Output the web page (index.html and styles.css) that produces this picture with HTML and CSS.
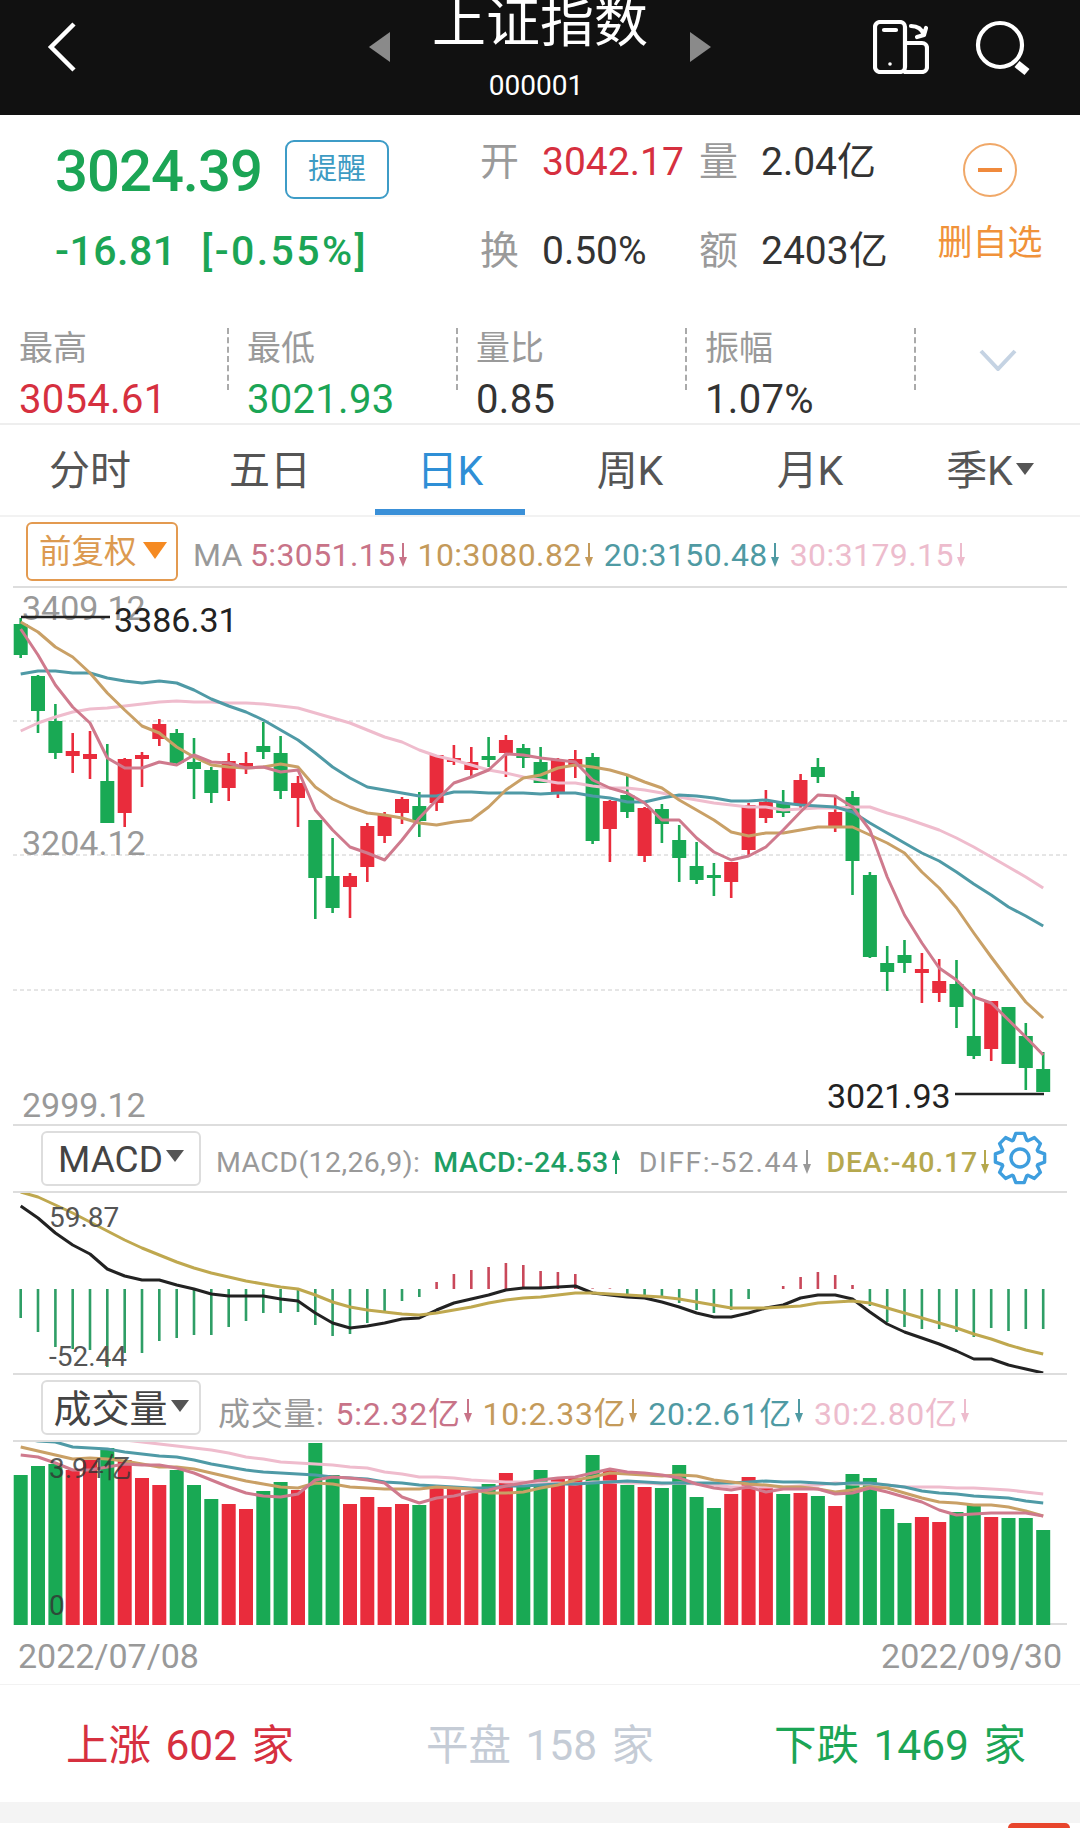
FILE: index.html
```html
<!DOCTYPE html>
<html lang="zh-CN">
<head>
    <meta charset="UTF-8">
    <meta name="viewport" content="width=device-width, initial-scale=1.0">
    <title>上证指数</title>
    <link rel="stylesheet" href="styles.css">
</head>
<body>
    <svg class="defs" width="0" height="0">
        <symbol id="arrowDown" viewBox="0 0 8 24">
            <path d="M3 0h2v14h3l-4 10-4-10h3z"/>
        </symbol>
    </svg>

    <header class="topbar">
        <div class="topbar-left">
            <svg class="icon-back" width="30" height="52" viewBox="0 0 30 52">
                <path d="M27 3 4 26l23 23"/>
            </svg>
        </div>
        <div class="topbar-title">
            <span class="tri tri-left"></span>
            <div class="title-block">
                <div class="title">上证指数</div>
                <div class="code">000001</div>
            </div>
            <span class="tri tri-right"></span>
        </div>
        <div class="topbar-right">
            <svg class="icon-line" width="56" height="54" viewBox="0 0 56 54">
                <rect x="2" y="2" width="30" height="50" rx="5"/>
                <path d="M11 10h12"/>
                <circle class="dot" cx="17" cy="44" r="1.8"/>
                <path d="M32 23h17a5 5 0 0 1 5 5v19a5 5 0 0 1-5 5H32"/>
                <path d="M38 6c6 0 11 3 13 9M44 17l7-2 2-7"/>
            </svg>
            <svg class="icon-line" width="56" height="56" viewBox="0 0 56 56">
                <circle cx="25" cy="25" r="22"/>
                <path class="handle" d="m42 44 10 8"/>
            </svg>
        </div>
    </header>

    <section class="quote">
        <div class="quote-top">
            <div class="quote-price">
                <div class="price-row">
                    <span class="price">3024.39</span>
                    <span class="remind">提醒</span>
                </div>
                <div class="change">-16.81 <span class="change-pct">[-0.55%]</span></div>
            </div>
            <div class="quote-grid">
                <span class="q-label">开</span><span class="q-value red">3042.17</span>
                <span class="q-label">量</span><span class="q-value">2.04亿</span>
                <span class="q-label">换</span><span class="q-value">0.50%</span>
                <span class="q-label">额</span><span class="q-value">2403亿</span>
            </div>
            <div class="quote-action">
                <span class="minus-circle"><span class="minus"></span></span>
                <span class="action-text">删自选</span>
            </div>
        </div>
        <div class="stats">
            <div class="stat">
                <div class="stat-label">最高</div>
                <div class="stat-value red">3054.61</div>
            </div>
            <div class="stat">
                <div class="stat-label">最低</div>
                <div class="stat-value green">3021.93</div>
            </div>
            <div class="stat">
                <div class="stat-label">量比</div>
                <div class="stat-value">0.85</div>
            </div>
            <div class="stat">
                <div class="stat-label">振幅</div>
                <div class="stat-value">1.07%</div>
            </div>
            <div class="stat-more">
                <svg width="38" height="22" viewBox="0 0 38 22"><path d="M2 2l17 18L36 2"/></svg>
            </div>
        </div>
    </section>

    <nav class="tabs">
        <div class="tab">分时</div>
        <div class="tab">五日</div>
        <div class="tab active">日K</div>
        <div class="tab">周K</div>
        <div class="tab">月K</div>
        <div class="tab">季K<span class="caret"></span></div>
    </nav>

    <div class="bar bar-first">
        <div class="btn-orange">前复权<span class="caret caret-orange"></span></div>
        <div class="legend legend-ma">
            <span class="leg gray leg-ma">MA</span>
            <span class="leg c5">5:3051.15<svg class="arrow"><use href="#arrowDown"/></svg></span>
            <span class="leg c10">10:3080.82<svg class="arrow"><use href="#arrowDown"/></svg></span>
            <span class="leg c20">20:3150.48<svg class="arrow"><use href="#arrowDown"/></svg></span>
            <span class="leg c30">30:3179.15<svg class="arrow"><use href="#arrowDown"/></svg></span>
        </div>
    </div>

    <svg class="chart chart-main" width="1080" height="536" viewBox="0 588 1080 536">
        <path class="grid" d="M13 721H1067M13 855H1067M13 990H1067"/>
        <text class="axis" x="22" y="620">3409.12</text>
        <text class="axis" x="22" y="855">3204.12</text>
        <text class="axis" x="22" y="1117">2999.12</text>
        <g id="candles"></g>
        <g id="maLines"></g>
        <path class="marker" d="M21 617H110M955 1094H1044"/>
        <text class="mark-text" x="114" y="632">3386.31</text>
        <text class="mark-text" x="827" y="1108">3021.93</text>
    </svg>

    <div class="bar bar-sub">
        <div class="btn-gray btn-macd">MACD<span class="caret"></span></div>
        <div class="legend legend-macd">
            <span class="leg gray">MACD(12,26,9):</span>
            <span class="leg macd-green">MACD:-24.53<svg class="arrow arrow-up"><use href="#arrowDown"/></svg></span>
            <span class="leg gray leg-diff">DIFF:-52.44<svg class="arrow"><use href="#arrowDown"/></svg></span>
            <span class="leg dea">DEA:-40.17<svg class="arrow"><use href="#arrowDown"/></svg></span>
        </div>
        <svg class="gear" width="54" height="54" viewBox="-27 -27 54 54">
            <path id="gearPath"/>
            <circle r="9"/>
        </svg>
    </div>

    <svg class="chart chart-macd" width="1080" height="180" viewBox="0 1193 1080 180">
        <g id="macdBars"></g>
        <g id="macdLines"></g>
        <text class="sub-text" x="49" y="1227">59.87</text>
        <text class="sub-text" x="49" y="1366">-52.44</text>
    </svg>

    <div class="bar bar-sub bar-vol">
        <div class="btn-gray btn-vol">成交量<span class="caret"></span></div>
        <div class="legend legend-vol">
            <span class="leg gray">成交量:</span>
            <span class="leg c5">5:2.32亿<svg class="arrow"><use href="#arrowDown"/></svg></span>
            <span class="leg c10">10:2.33亿<svg class="arrow"><use href="#arrowDown"/></svg></span>
            <span class="leg c20">20:2.61亿<svg class="arrow"><use href="#arrowDown"/></svg></span>
            <span class="leg c30">30:2.80亿<svg class="arrow"><use href="#arrowDown"/></svg></span>
        </div>
    </div>

    <svg class="chart chart-vol" width="1080" height="183" viewBox="0 1442 1080 183">
        <path class="grid-solid" d="M1050 1624H1067"/>
        <g id="volBars"></g>
        <g id="volLines"></g>
        <text class="sub-text sub-over" x="49" y="1478">3.94亿</text>
        <text class="sub-text sub-over" x="49" y="1615">0</text>
    </svg>

    <div class="dates">
        <span>2022/07/08</span>
        <span>2022/09/30</span>
    </div>

    <div class="breadth">
        <div class="red">上涨 602 家</div>
        <div class="flat">平盘 158 家</div>
        <div class="green">下跌 1469 家</div>
    </div>

    <div class="footer-gray"></div>
    <div class="footer-end"><span class="red-tab"></span></div>

    <script src="chart.js"></script>
</body>
</html>
```

FILE: styles.css
```css
* {
    box-sizing: border-box;
}
body {
    margin: 0;
    width: 1080px;
    height: 1828px;
    overflow: hidden;
    background: white;
    color: #333;
    font-family: Roboto, "Noto Sans CJK SC", sans-serif;
}
.defs {
    position: absolute;
}
.red {
    color: #d6303f;
}
.green {
    color: #1ba555;
}

/* top bar */
.topbar {
    height: 115px;
    background: #111;
    color: white;
    display: grid;
    grid-template-columns: 1fr auto 1fr;
    overflow: hidden;
}
.topbar-left {
    padding: 21px 0 0 47px;
}
.icon-back path {
    fill: none;
    stroke: white;
    stroke-width: 4.5;
}
.topbar-title {
    display: flex;
    gap: 42px;
}
.tri {
    width: 0;
    height: 0;
    margin-top: 32px;
    border-top: 15px solid transparent;
    border-bottom: 15px solid transparent;
}
.tri-left {
    border-right: 21px solid #8a8a8a;
}
.tri-right {
    border-left: 21px solid #8a8a8a;
}
.title-block {
    text-align: center;
}
.title {
    font-size: 54px;
    line-height: 54px;
    margin-top: -3px;
}
.code {
    font-size: 28px;
    line-height: 30px;
    margin-top: 20px;
    padding-right: 8px;
}
.topbar-right {
    display: flex;
    justify-content: flex-end;
    align-items: flex-start;
    gap: 46px;
    padding: 20px 49px 0 0;
}
.icon-line {
    fill: none;
    stroke: white;
    stroke-width: 4.2;
    stroke-linecap: round;
    stroke-linejoin: round;
}
.icon-line .dot {
    fill: white;
    stroke: none;
}
.icon-line .handle {
    stroke-width: 8;
    stroke-linecap: butt;
}

/* quote */
.quote {
    height: 310px;
    border-bottom: 2px solid #eee;
}
.quote-top {
    height: 213px;
    padding-left: 55px;
    display: flex;
}
.quote-price {
    width: 425px;
    padding-top: 24px;
}
.price-row {
    display: flex;
    align-items: center;
    gap: 23px;
    height: 60px;
}
.price {
    font-size: 58px;
    line-height: 60px;
    font-weight: 500;
    color: #1ba555;
    letter-spacing: -1px;
    padding-top: 4px;
}
.remind {
    width: 104px;
    height: 59px;
    border: 2.5px solid #3d9cc7;
    border-radius: 9px;
    color: #3d9bc3;
    font-size: 29px;
    line-height: 54px;
    text-align: center;
}
.change {
    margin-top: 27px;
    font-size: 41px;
    line-height: 50px;
    font-weight: 500;
    letter-spacing: 0.5px;
    color: #1ba555;
    white-space: nowrap;
}
.change-pct {
    margin-left: 14px;
    letter-spacing: 2.4px;
}
.quote-grid {
    width: 457px;
    margin-top: 2px;
    display: grid;
    grid-template-columns: 62px 157px 62px 176px;
    grid-auto-rows: 89px;
    align-items: center;
}
.q-label {
    font-size: 39px;
    line-height: 44px;
    color: #9a9a9a;
}
.q-value {
    font-size: 39px;
    line-height: 44px;
    white-space: nowrap;
}
.quote-action {
    width: 106px;
    padding-top: 28px;
    display: flex;
    flex-direction: column;
    align-items: center;
    gap: 29px;
}
.minus-circle {
    width: 54px;
    height: 54px;
    border: 2.5px solid #f0a868;
    border-radius: 50%;
    display: flex;
    align-items: center;
    justify-content: center;
}
.minus {
    width: 24px;
    height: 4px;
    background: #f08a3c;
}
.action-text {
    font-size: 35px;
    line-height: 35px;
    color: #f0923a;
    white-space: nowrap;
}
.stats {
    display: flex;
    padding-top: 2px;
}
.stat {
    position: relative;
    width: 229px;
    padding-left: 18px;
}
.stat:first-child {
    padding-left: 19px;
}
.stat::after {
    content: "";
    position: absolute;
    right: 0;
    top: -2px;
    height: 62px;
    border-right: 2px dashed #aaa;
}
.stat-label {
    font-size: 34px;
    line-height: 36px;
    color: #9a9a9a;
}
.stat-value {
    font-size: 40px;
    line-height: 52px;
    margin-top: 8px;
    letter-spacing: 0.3px;
    white-space: nowrap;
}
.stat-more {
    flex: 1;
    padding: 19px 0 0 63px;
}
.stat-more path {
    fill: none;
    stroke: #c5d3e3;
    stroke-width: 4;
}

/* period tabs */
.tabs {
    height: 92px;
    display: flex;
    border-bottom: 2px solid #f2f2f2;
}
.tab {
    position: relative;
    width: 180px;
    font-size: 41px;
    line-height: 93px;
    text-align: center;
    color: #555;
}
.tab.active {
    color: #2f8fd6;
}
.tab.active::after {
    content: "";
    position: absolute;
    left: 15px;
    right: 15px;
    bottom: 0;
    height: 6px;
    background: #3a90d8;
}
.caret {
    display: inline-block;
    width: 0;
    height: 0;
    margin-left: 3px;
    vertical-align: 10px;
    border-left: 9px solid transparent;
    border-right: 9px solid transparent;
    border-top: 12px solid #555;
}

/* indicator bars */
.bar {
    margin: 0 13px;
    display: flex;
    align-items: center;
    border-bottom: 2px solid #ddd;
}
.bar-first {
    height: 71px;
}
.bar-sub {
    position: relative;
    height: 69px;
    border-top: 2px solid #ddd;
}
.btn-orange {
    width: 152px;
    height: 59px;
    margin-left: 13px;
    border: 2.5px solid #e39a50;
    border-radius: 6px;
    color: #dc9a50;
    font-size: 32.5px;
    line-height: 57px;
    padding-left: 11px;
    white-space: nowrap;
}
.caret-orange {
    margin-left: 6px;
    vertical-align: 4px;
    border-left: 12px solid transparent;
    border-right: 12px solid transparent;
    border-top: 17px solid #f58a22;
}
.btn-gray {
    width: 160px;
    height: 55px;
    margin-left: 28px;
    border: 2px solid #ddd;
    border-radius: 6px;
    color: #444;
    text-align: center;
    white-space: nowrap;
}
.btn-macd {
    font-size: 37px;
    line-height: 54px;
}
.btn-vol {
    font-size: 38px;
    line-height: 54px;
}
.legend {
    display: flex;
    white-space: nowrap;
}
.leg {
    display: inline-flex;
    align-items: center;
}
.legend-ma {
    margin-left: 15px;
    padding-top: 7px;
    gap: 11px;
    font-size: 32px;
    letter-spacing: 0.4px;
}
.leg-ma {
    margin-right: -4px;
}
.legend-macd {
    margin-left: 15px;
    padding-top: 7px;
    gap: 13px;
    font-size: 28.5px;
    letter-spacing: 0.4px;
}
.leg-diff {
    letter-spacing: 1.5px;
    margin-left: 6px;
    margin-right: 3px;
}
.legend-vol {
    margin-left: 17px;
    padding-top: 6px;
    gap: 11px;
    font-size: 32px;
    letter-spacing: 0.7px;
}
.gray {
    color: #999;
}
.c5 {
    color: #c87388;
}
.c10 {
    color: #c49a5a;
}
.c20 {
    color: #4f9aa3;
}
.c30 {
    color: #edbccd;
}
.macd-green {
    color: #1e9e64;
    font-weight: 500;
}
.dea {
    color: #b5a84e;
    font-weight: 500;
    letter-spacing: 0.8px;
}
.arrow {
    width: 8px;
    height: 24px;
    margin-left: 3px;
    fill: currentColor;
}
.arrow-up {
    transform: rotate(180deg);
}
.gear {
    position: absolute;
    right: 20px;
    top: 5px;
    fill: none;
    stroke: #3e9ede;
    stroke-width: 3.4;
    stroke-linejoin: round;
}

/* charts */
.chart {
    display: block;
}
.grid {
    fill: none;
    stroke: #ccc;
    stroke-width: 1;
    stroke-dasharray: 4 3;
}
.grid-solid {
    fill: none;
    stroke: #ddd;
    stroke-width: 2;
}
.marker {
    fill: none;
    stroke: #222;
    stroke-width: 2.5;
}
.axis {
    font-size: 34px;
    fill: #999;
}
.mark-text {
    font-size: 34px;
    fill: #222;
}
.sub-text {
    font-size: 28px;
    fill: #555;
}
.sub-over {
    fill: #333;
    opacity: 0.8;
}
.ma-line {
    fill: none;
    stroke-width: 3;
    stroke-linejoin: round;
}

/* bottom */
.dates {
    height: 60px;
    padding: 2px 18px 0;
    display: flex;
    justify-content: space-between;
    align-items: center;
    font-size: 34px;
    color: #999;
    border-bottom: 1px solid #f2f2f2;
}
.breadth {
    height: 117px;
    padding-bottom: 4px;
    display: grid;
    grid-template-columns: repeat(3, 360px);
    align-items: center;
    text-align: center;
    font-size: 42.5px;
    word-spacing: 4px;
}
.flat {
    color: #c5ccd6;
}
.footer-gray {
    height: 21px;
    background: #f4f4f4;
}
.footer-end {
    display: flex;
    justify-content: flex-end;
    padding-right: 10px;
}
.red-tab {
    width: 62px;
    height: 5px;
    background: #e8452c;
    border-radius: 14px 14px 0 0;
}
```

FILE: chart.js
```js
const GREEN = "#19a954";
const RED = "#e92c3c";
const START_X = 20.7;
const STEP = 17.33;

function xAt(i) {
    return START_X + i * STEP;
}

function lineSvg(values, color) {
    const points = values.map((y, i) => xAt(i).toFixed(1) + "," + y).join(" ");
    return `<polyline class="ma-line" points="${points}" stroke="${color}"/>`;
}

// [g|r, wick top, wick bottom, body top, body bottom]
const candles = [
    ["g",618,658,624,655],["g",675,733,676,711],["g",704,759,721,753],["r",733,773,751,756],["r",731,779,754,759],
    ["g",744,823,781,823],["r",758,827,759,813],["r",752,787,755,759],["r",719,746,724,739],["g",729,765,733,763],
    ["g",738,799,762,769],["g",767,803,770,793],["r",753,801,761,788],["r",752,774,763,767],["g",722,759,746,752],
    ["g",736,799,753,791],["r",776,827,783,798],["g",820,919,820,878],["g",838,913,876,908],["r",873,918,876,887],
    ["r",823,882,826,867],["r",812,843,815,836],["r",797,824,799,813],["g",792,837,806,821],["r",755,811,755,803],
    ["r",745,765,758,762],["r",747,778,762,770],["g",737,767,756,760],["r",735,777,740,753],["g",744,768,748,758],
    ["g",747,783,762,783],["r",758,798,760,794],["r",750,778,759,766],["g",753,844,757,841],["r",800,862,801,829],
    ["g",774,818,795,812],["r",807,862,808,856],["g",804,843,809,824],["g",825,882,840,858],["g",842,884,866,880],
    ["g",863,896,875,878],["r",862,898,862,882],["r",803,855,805,850],["r",790,823,802,818],["g",790,817,803,813],
    ["r",774,808,780,805],["g",758,783,767,777],["r",795,832,812,826],["g",791,895,797,861],["g",872,958,875,957],
    ["g",946,991,963,972],["g",940,973,955,963],["r",953,1003,969,973],["r",959,1002,981,993],["g",960,1028,984,1007],
    ["g",989,1059,1036,1056],["r",1001,1061,1001,1049],["g",1007,1064,1007,1064],["g",1023,1090,1036,1068],["g",1052,1092,1069,1092]
];

const ma5 = [629,655,685,707,723,758,768,768,762,765,755,762,763,768,767,772,770,810,830,847,853,860,840,818,800,783,777,770,754,755,758,760,762,780,788,793,803,820,820,838,852,860,856,847,830,812,795,796,807,830,877,915,943,968,980,997,1003,1020,1037,1055];
const ma10 = [622,632,647,657,673,693,710,726,733,747,757,765,767,768,767,764,767,787,799,807,813,815,818,823,825,822,820,807,790,778,775,768,765,767,770,775,782,788,800,810,820,832,836,833,833,830,827,827,827,835,843,853,872,888,908,933,957,980,1002,1018];
const ma20 = [674,671,671,673,673,678,681,683,681,683,690,699,706,712,720,730,740,753,767,778,787,790,793,796,796,792,792,793,793,793,794,793,793,796,798,802,802,798,795,796,798,801,801,800,803,805,806,807,812,823,833,843,853,861,872,884,895,907,916,926];
const ma30 = [731,723,717,712,709,708,706,704,702,701,702,702,703,703,704,706,708,713,718,723,730,737,742,750,756,760,765,770,773,777,780,783,783,786,788,788,790,793,797,800,803,805,807,807,810,809,808,808,807,807,813,818,824,830,838,847,857,867,877,888];

// height from the zero line, up is red
const macd = [-29,-43,-58,-60,-61,-78,-64,-64,-52,-49,-46,-46,-38,-32,-24,-24,-23,-36,-47,-45,-34,-22,-12,-8,7,15,19,22,26,24,18,17,15,0.6,0.6,-6,-7,-8,-14,-21,-24,-21,-10,0,3,12,17,14,4,-17,-33,-38,-40,-40,-43,-48,-39,-42,-40,-40];
const diff = [1206,1218,1233,1245,1254,1269,1276,1280,1280,1285,1289,1294,1296,1296,1296,1299,1301,1313,1323,1328,1326,1323,1319,1318,1310,1303,1299,1295,1290,1288,1288,1287,1286,1293,1295,1297,1298,1302,1307,1313,1317,1317,1313,1308,1305,1298,1295,1295,1299,1312,1324,1332,1338,1344,1351,1359,1359,1365,1369,1373];
const dea = [1192,1197,1205,1213,1222,1231,1240,1248,1255,1262,1268,1273,1277,1281,1284,1287,1289,1295,1302,1307,1310,1312,1314,1315,1313,1310,1307,1303,1300,1298,1297,1295,1293,1293,1294,1295,1296,1297,1299,1302,1305,1308,1308,1308,1307,1306,1303,1302,1301,1303,1308,1313,1318,1323,1328,1334,1339,1345,1350,1354];

const volume = [150,159,161,155,165,177,165,147,140,155,140,126,121,116,134,143,135,182,150,121,128,118,121,120,138,139,133,141,152,140,155,147,147,170,155,140,138,137,160,128,117,131,148,140,131,132,129,119,151,147,116,102,108,103,113,121,108,107,107,95];
const vol5 = [1455,1457,1463,1470,1470,1467,1464,1465,1465,1468,1473,1480,1487,1493,1496,1497,1494,1480,1477,1478,1480,1483,1497,1503,1498,1496,1492,1490,1486,1483,1480,1478,1477,1473,1469,1472,1473,1475,1478,1484,1488,1490,1487,1492,1489,1489,1489,1494,1493,1488,1492,1497,1502,1510,1515,1514,1513,1513,1513,1516];
const vol10 = [1447,1451,1455,1459,1458,1459,1461,1464,1467,1467,1469,1473,1477,1481,1484,1487,1488,1483,1484,1487,1488,1489,1489,1489,1487,1488,1489,1493,1493,1492,1488,1485,1480,1477,1473,1474,1475,1476,1475,1476,1480,1482,1484,1485,1487,1487,1489,1492,1490,1487,1488,1493,1498,1502,1503,1505,1505,1507,1511,1516];
const vol20 = [1438,1441,1442,1447,1448,1449,1452,1454,1456,1457,1460,1464,1467,1470,1472,1473,1474,1475,1477,1478,1479,1482,1483,1485,1486,1487,1488,1488,1486,1486,1485,1484,1484,1483,1482,1481,1482,1483,1483,1483,1483,1483,1482,1481,1482,1482,1483,1484,1483,1483,1485,1487,1491,1493,1494,1496,1497,1498,1501,1503];
const vol30 = [1425,1428,1431,1434,1436,1438,1440,1442,1444,1446,1448,1450,1453,1457,1459,1462,1463,1464,1465,1467,1468,1472,1474,1477,1477,1478,1480,1481,1482,1482,1483,1483,1484,1482,1482,1483,1483,1484,1483,1484,1485,1487,1487,1487,1487,1486,1485,1483,1484,1484,1485,1487,1487,1487,1488,1488,1489,1490,1492,1494];

const PINK = "#cf7a8d";
const TAN = "#c9a066";
const TEAL = "#4f9aa6";
const LIGHT_PINK = "#efbccd";

document.getElementById("candles").innerHTML = candles.map((c, i) => {
    const color = c[0] === "g" ? GREEN : RED;
    const x = xAt(i);
    return `<rect x="${(x - 1.3).toFixed(1)}" y="${c[1]}" width="2.6" height="${c[2] - c[1]}" fill="${color}"/>` +
        `<rect x="${(x - 7).toFixed(1)}" y="${c[3]}" width="14" height="${c[4] - c[3]}" fill="${color}"/>`;
}).join("");

document.getElementById("maLines").innerHTML =
    lineSvg(ma30, LIGHT_PINK) + lineSvg(ma20, TEAL) + lineSvg(ma10, TAN) + lineSvg(ma5, PINK);

document.getElementById("macdBars").innerHTML = macd.map((h, i) => {
    if (h === 0) return "";
    const top = h > 0 ? 1289 - h : 1289;
    const color = h > 0 ? "#c9485a" : "#2f9e66";
    return `<rect x="${(xAt(i) - 1.3).toFixed(1)}" y="${top}" width="2.6" height="${Math.abs(h)}" fill="${color}"/>`;
}).join("");

document.getElementById("macdLines").innerHTML = lineSvg(diff, "#222") + lineSvg(dea, "#bfa84f");

document.getElementById("volBars").innerHTML = volume.map((h, i) => {
    const color = candles[i][0] === "g" ? GREEN : RED;
    return `<rect x="${(xAt(i) - 7).toFixed(1)}" y="${1625 - h}" width="14" height="${h}" fill="${color}"/>`;
}).join("");

document.getElementById("volLines").innerHTML =
    lineSvg(vol30, LIGHT_PINK) + lineSvg(vol20, TEAL) + lineSvg(vol10, TAN) + lineSvg(vol5, PINK);

// eight teeth, top tooth at 12 o'clock
let gear = "";
for (let t = 0; t < 8; t++) {
    const a = t * Math.PI / 4 - Math.PI / 2;
    [[19, -0.36], [25, -0.17], [25, 0.17], [19, 0.36]].forEach(p => {
        const px = (p[0] * Math.cos(a + p[1])).toFixed(1);
        const py = (p[0] * Math.sin(a + p[1])).toFixed(1);
        gear += (gear ? "L" : "M") + px + " " + py;
    });
}
document.getElementById("gearPath").setAttribute("d", gear + "Z");
```
